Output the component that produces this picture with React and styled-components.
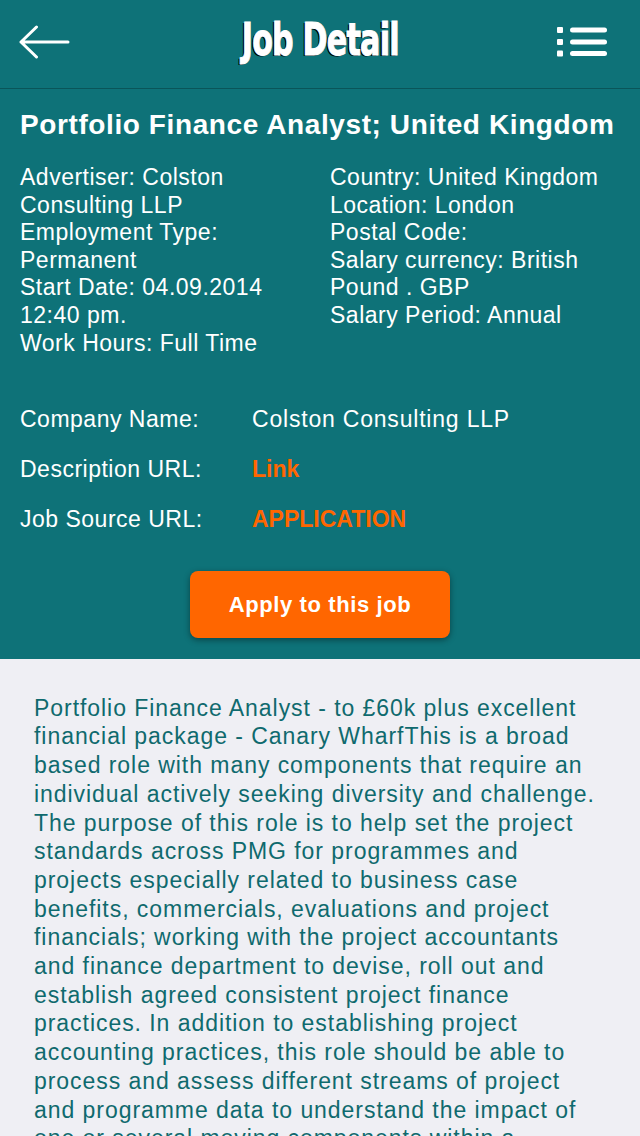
import styled, { createGlobalStyle } from 'styled-components';

const GlobalStyle = createGlobalStyle`
  html, body {
    margin: 0;
    padding: 0;
    overflow: hidden;
    background: #efeff4;
  }
`;

const details = {
  left: [
    'Advertiser: Colston Consulting LLP',
    'Employment Type: Permanent',
    'Start Date: 04.09.2014 12:40 pm.',
    'Work Hours: Full Time',
  ],
  right: [
    'Country: United Kingdom',
    'Location: London',
    'Postal Code:',
    'Salary currency: British Pound . GBP',
    'Salary Period: Annual',
  ],
};

const description = 'Portfolio Finance Analyst - to £60k plus excellent financial package - Canary WharfThis is a broad based role with many components that require an individual actively seeking diversity and challenge. The purpose of this role is to help set the project standards across PMG for programmes and projects especially related to business case benefits, commercials, evaluations and project financials; working with the project accountants and finance department to devise, roll out and establish agreed consistent project finance practices. In addition to establishing project accounting practices, this role should be able to process and assess different streams of project and programme data to understand the impact of one or several moving components within a programme and to report on the overall financial health of the portfolio.';

export default function App() {
  return (
    <>
      <GlobalStyle />
      <Screen>
        <TopBar>
          <IconButton aria-label="back" $shift="-6px">
            <svg width="52" height="34" viewBox="0 0 52 34">
              <path d="M2 17 H49 M17.5 2 L2 17 L17.5 32" fill="none" stroke="#fff" strokeWidth="3" strokeLinecap="round" strokeLinejoin="round" />
            </svg>
          </IconButton>
          <Title>Job Detail</Title>
          <IconButton aria-label="menu" $right $shift="7px">
            <svg width="52" height="30" viewBox="0 0 52 30">
              <rect x="1" y="0" width="6" height="6" rx="1" fill="#fff" />
              <rect x="1" y="12" width="6" height="6" rx="1" fill="#fff" />
              <rect x="1" y="23.5" width="6" height="6" rx="1" fill="#fff" />
              <rect x="14" y="0.5" width="37" height="5" rx="2.5" fill="#fff" />
              <rect x="14" y="12.5" width="37" height="5" rx="2.5" fill="#fff" />
              <rect x="14" y="24" width="37" height="5" rx="2.5" fill="#fff" />
            </svg>
          </IconButton>
        </TopBar>

        <Summary>
          <JobTitle>Portfolio Finance Analyst; United Kingdom</JobTitle>
          <InfoGrid>
            <InfoColumn>
              {details.left.map((item) => <InfoLine key={item}>{item}</InfoLine>)}
            </InfoColumn>
            <InfoColumn>
              {details.right.map((item) => <InfoLine key={item}>{item}</InfoLine>)}
            </InfoColumn>
          </InfoGrid>

          <FieldList>
            <Field>
              <FieldLabel>Company Name:</FieldLabel>
              <FieldValue>Colston Consulting LLP</FieldValue>
            </Field>
            <Field>
              <FieldLabel>Description URL:</FieldLabel>
              <FieldValue $link>Link</FieldValue>
            </Field>
            <Field>
              <FieldLabel>Job Source URL:</FieldLabel>
              <FieldValue $link>APPLICATION</FieldValue>
            </Field>
          </FieldList>

          <ApplyButton>Apply to this job</ApplyButton>
        </Summary>

        <Description>{description}</Description>
      </Screen>
    </>
  );
}

const Screen = styled.div`
  width: 640px;
  height: 1136px;
  overflow: hidden;
  background: #efeff4;
  display: flex;
  flex-direction: column;
`;

const TopBar = styled.header`
  height: 89px;
  flex-shrink: 0;
  box-sizing: border-box;
  background: #0e7278;
  border-bottom: 1px solid #0a5559;
  display: grid;
  grid-template-columns: 1fr auto 1fr;
  align-items: center;
  padding: 0 25px 4px 25px;
`;

const IconButton = styled.button`
  background: none;
  border: 0;
  padding: 0;
  display: flex;
  align-items: center;
  justify-self: ${(p) => (p.$right ? 'end' : 'start')};
  ${(p) => (p.$right ? `margin-right: ${p.$shift};` : `margin-left: ${p.$shift};`)}
  cursor: pointer;
`;

const Title = styled.h1`
  margin: 0 0 4px;
  font-family: Impact, "DejaVu Sans Condensed", "Liberation Sans", sans-serif;
  font-weight: 700;
  font-stretch: condensed;
  font-size: 44px;
  line-height: 44px;
  letter-spacing: -1px;
  color: #fff;
  -webkit-text-stroke: 1px #fff;
  text-shadow: -2px 1px 0 #000;
  transform: scaleX(0.76);
`;

const Summary = styled.section`
  background: #0e7278;
  padding: 20px 20px 21px;
  display: flex;
  flex-direction: column;
  color: #fff;
  font-family: "Liberation Sans", Arial, sans-serif;
`;

const JobTitle = styled.h2`
  margin: 0;
  font-weight: 700;
  font-size: 28px;
  line-height: 32px;
  letter-spacing: 0.6px;
  white-space: nowrap;
`;

const InfoGrid = styled.div`
  display: grid;
  grid-template-columns: 310px 1fr;
  margin-top: 23px;
`;

const InfoColumn = styled.div`
  display: flex;
  flex-direction: column;
`;

const InfoLine = styled.div`
  font-size: 23px;
  line-height: 27.6px;
  letter-spacing: 0.5px;
  padding-right: 20px;
`;

const FieldList = styled.div`
  display: flex;
  flex-direction: column;
  gap: 22px;
  margin-top: 48px;
`;

const Field = styled.div`
  display: grid;
  grid-template-columns: 232px 1fr;
  align-items: center;
  height: 28px;
`;

const FieldLabel = styled.span`
  font-size: 23px;
  letter-spacing: 0.5px;
`;

const FieldValue = styled.span`
  font-size: 23px;
  font-weight: ${(p) => (p.$link ? 700 : 400)};
  letter-spacing: ${(p) => (p.$link ? '0' : '0.8px')};
  color: ${(p) => (p.$link ? '#ff6600' : '#fff')};
`;

const ApplyButton = styled.button`
  align-self: center;
  margin-top: 38px;
  width: 260px;
  height: 67px;
  border: 0;
  border-radius: 8px;
  background: #ff6600;
  color: #fff;
  font-family: "Liberation Sans", Arial, sans-serif;
  font-weight: 700;
  font-size: 22px;
  letter-spacing: 0.6px;
  box-shadow: 0 2px 6px rgba(0, 0, 0, 0.4);
  cursor: pointer;
`;

const Description = styled.p`
  margin: 0;
  padding: 34.6px 38px 0 34px;
  font-family: "Liberation Sans", Arial, sans-serif;
  font-size: 23px;
  line-height: 28.7px;
  letter-spacing: 0.95px;
  color: #0f6a6e;
`;
